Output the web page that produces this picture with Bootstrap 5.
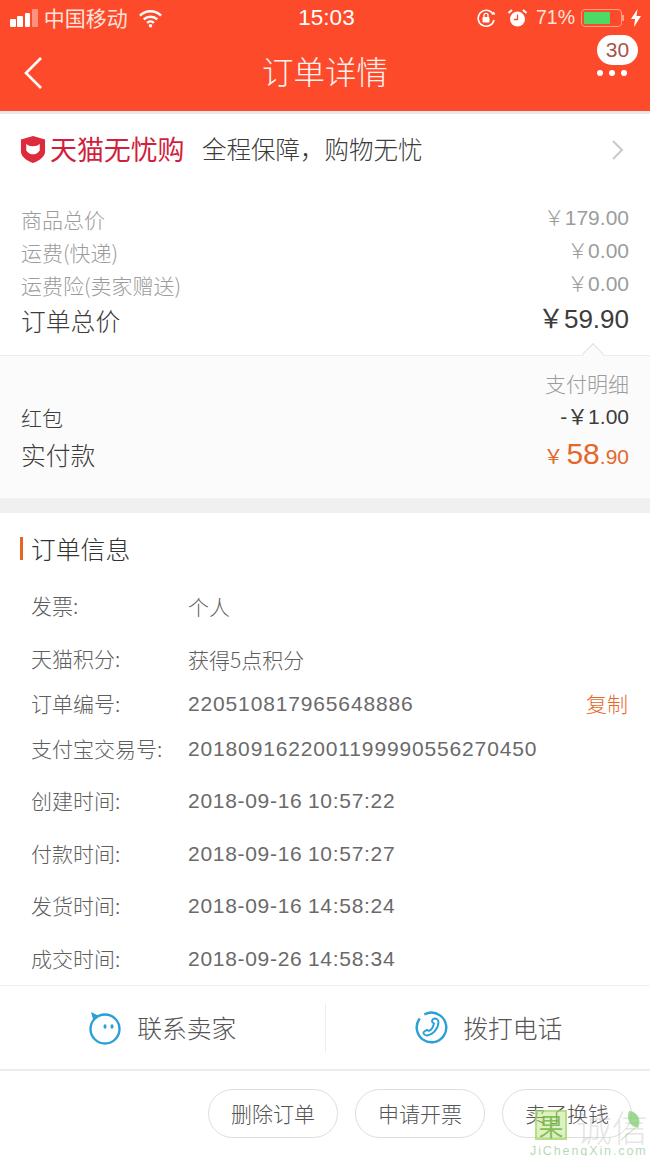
<!DOCTYPE html>
<html lang="zh">
<head>
<meta charset="utf-8">
<link href="https://cdn.jsdelivr.net/npm/bootstrap@5.3.0/dist/css/bootstrap.min.css" rel="stylesheet">
<style>
html,body{margin:0;background:#fff;}
.screen{width:650px;height:1156px;overflow:hidden;position:relative;font-family:"Liberation Sans","Noto Sans CJK SC",sans-serif;color:#3c3c3c;background:#fff;}
.cjk{font-family:"Noto Sans CJK SC",sans-serif;}
.hdr{background:#fd4a2b;height:111px;color:#fff;}
.stat{height:35px;padding:0 9px 0 10px;font-size:19.5px;line-height:35px;color:#fde3dc;}
.stat-l{width:272px;}
.stat-r{width:270px;}
.stat-op{font-size:21px;margin-left:6px;}
.stat-wifi{margin-left:10px;}
.stat-time{font-size:22.5px;color:#fff;}
.sig{gap:1.7px;height:18px;}
.sig i{display:block;width:5.7px;background:#fff;border-radius:1px;}
.stat-gap{margin-left:11px;}
.stat-gap2{margin-left:8px;}
.bat{width:41px;height:18px;border:1px solid #ffa08a;border-radius:4px;padding:2px;margin-left:6px;}
.bat b{display:block;height:100%;width:26px;background:#4cd964;border-radius:1px;}
.nub{width:2px;height:6px;background:#ffa08a;margin-right:7px;}
.tbar{height:76px;padding:0 12px 0 22px;}
.tside{width:32px;}
.back{margin-top:20px;display:block;}
.ttl{font-size:31.5px;font-weight:300;line-height:70px;color:#fff3ef;}
.more-wrap{width:42px;height:76px;position:relative;}
.cnt{position:absolute;left:1px;top:0;width:41px;height:30px;border-radius:15px;background:#fff;color:#a9534a;font-size:21px;line-height:30px;text-align:center;}
.dots{position:absolute;left:1px;top:35px;gap:6px;}
.dots i{display:block;width:6px;height:6px;background:#fff;border-radius:50%;}
.hline{height:3px;background:#e8e8e8;}
.promo{height:71px;padding:0 25px 0 20px;}
.shield{width:26px;height:27px;}
.promo-brand{font-size:27px;color:#d11f3d;font-weight:400;margin-left:4px;width:137px;white-space:nowrap;letter-spacing:-.1px;}
.promo-text{font-size:24.5px;font-weight:300;margin-left:15px;color:#3b3b3b;}
.prices{padding:18px 21px 0;height:170px;}
.prow{height:33px;font-size:21px;line-height:33px;color:#9c9c9c;font-weight:300;}
.prow .num{line-height:29px;}
.ptotal{height:37px;font-size:24.8px;line-height:37px;color:#3c3c3c;}
.ptotal .val{font-size:26px;line-height:35px;}
.detail{background:#fbfbfb;border-top:1px solid #ececec;height:143px;padding:12px 21px 0;position:relative;}
.caret{position:absolute;right:50px;top:-9px;width:14px;height:14px;transform:rotate(45deg) scale(1.1);transform-origin:center;background:#fbfbfb;border-top:1px solid #e4e4e4;border-left:1px solid #e4e4e4;}
.pd{font-size:21px;color:#9c9c9c;text-align:right;height:33px;line-height:30px;font-weight:300;}
.pr{height:33px;line-height:33px;font-size:21px;color:#3c3c3c;}
.pr .num{line-height:31px;}
.pr2{height:41px;line-height:41px;font-size:24.8px;color:#3c3c3c;}
.orange{color:#e5682a;line-height:39px;}
.big{font-size:30px;}
.mid{font-size:21px;}
.yen{font-size:20px;margin-right:3px;}
.sep{height:15px;background:#f0f0f0;}
.info-h{height:71px;padding-left:20px;}
.bar-o{width:3px;height:23px;background:#e8641e;margin-right:8px;}
.info-t{font-size:24.8px;font-weight:300;color:#333;}
.infos{height:401px;padding-top:7px;}
.irow{padding:0 22px 0 31px;font-size:21px;line-height:30px;height:30px;color:#5e5e5e;font-weight:300;}
.ilab{width:157px;line-height:28px;}
.ival{letter-spacing:.85px;color:#6a6a6a;font-weight:400;}
.dt{letter-spacing:.7px;word-spacing:-1px;}
.copy{color:#e5682a;line-height:28px;}
.gl{margin-top:22.5px;}
.gs{margin-top:14.5px;}
.gm{margin-top:15.5px;}
.foot1{height:86px;border-top:1px solid #efefef;border-bottom:2px solid #ececec;}
.fcell{flex:1 1 0;gap:15px;font-size:24.8px;font-weight:300;color:#555;}
.fcell-r svg{margin-left:2px;}
.fdiv{width:1px;height:50px;background:#eee;}
.foot2{padding:18px 18px 0 0;gap:17px;}
.pillbtn{width:130px;height:49px;border-radius:25px;border:1px solid #ddd;font-size:21px;font-weight:300;color:#555;background:#fff;padding:0;line-height:47px;text-align:center;}
.wm{position:absolute;left:533px;top:1109px;width:117px;height:47px;}
.wm-box{position:absolute;left:2px;top:1px;width:32px;height:30px;background:rgba(180,225,120,.45);border:2px solid rgba(150,210,90,.55);color:rgba(110,175,60,.8);font-size:25px;line-height:26px;text-align:center;}
.wm-t{position:absolute;left:43px;top:-1px;font-size:36px;line-height:36px;font-weight:300;color:rgba(190,190,190,.4);white-space:nowrap;}
.wm-u{position:absolute;left:-3px;top:36px;font-size:12.5px;letter-spacing:1.9px;color:rgba(130,190,130,.6);white-space:nowrap;line-height:12px;}
.leaf{position:absolute;left:86px;top:0;}
</style>
</head>
<body>
<div class="screen">
  <div class="hdr">
    <div class="stat d-flex align-items-center justify-content-between">
      <div class="stat-l d-flex align-items-center">
        <div class="sig d-flex align-items-end"><i style="height:8px"></i><i style="height:11px"></i><i style="height:14px"></i><i style="height:18px;opacity:.4"></i></div>
        <span class="cjk stat-op">中国移动</span>
        <svg class="stat-wifi" width="25" height="20" viewBox="0 0 26 20"><path d="M2 7.500a15.500 15.500 0 0 1 22 0M6 11.500a10 10 0 0 1 14 0M9.500 15a5 5 0 0 1 7 0" fill="none" stroke="#fff" stroke-width="2.600"/><circle cx="13" cy="18" r="1.800" fill="#fff"/></svg>
      </div>
      <div class="stat-time">15:03</div>
      <div class="stat-r d-flex align-items-center justify-content-end">
        <svg width="20" height="20" viewBox="0 0 20 20"><path d="M17 6a8 8 0 1 0 1 6" fill="none" stroke="#fff" stroke-width="1.600"/><path d="M19.500 6.500l-4 .3 2.200-3.400z" fill="#fff"/><rect x="6.500" y="9" width="7" height="5.500" rx="1" fill="#fff"/><path d="M8 9V7.400a2 2 0 0 1 4 0V9" fill="none" stroke="#fff" stroke-width="1.300"/></svg>
        <svg class="stat-gap" width="21" height="20" viewBox="0 0 21 20"><circle cx="10.500" cy="11" r="7.500" fill="#fff"/><path d="M10.500 6.500V11.500H7" fill="none" stroke="#fd4a2b" stroke-width="1.300"/><path d="M1.500 5l3.500-3M19.500 5l-3.500-3" stroke="#fff" stroke-width="2.200"/></svg>
        <span class="stat-gap2">71%</span>
        <div class="bat"><b></b></div>
        <div class="nub"></div>
        <svg width="10" height="18" viewBox="1 0 10 18" preserveAspectRatio="none"><path d="M7.500 0L1 10h4l-1 8 7-11H6.500z" fill="#fff"/></svg>
      </div>
    </div>
    <div class="tbar d-flex align-items-start justify-content-between">
      <div class="tside"><svg class="back" width="22" height="36" viewBox="0 0 22 36"><path d="M19 3L4 18l15 15" fill="none" stroke="#fff" stroke-width="2.600"/></svg></div>
      <div class="ttl cjk">订单详情</div>
      <div class="more-wrap"><span class="cnt">30</span><div class="dots d-flex"><i></i><i></i><i></i></div></div>
    </div>
  </div>
  <div class="hline"></div>
  <div class="promo d-flex align-items-center">
    <svg class="shield" viewBox="0 0 25 28"><path d="M12.500 0L25 3.500V16c0 5-5 9-12.500 12C5 25 0 21 0 16V3.500z" fill="#dd2a3d"/><path d="M5.500 8c2 2 4 2.500 7 2.500S17.500 10 19.500 8v7c-2 3-4.500 4-7 4s-5-1-7-4z" fill="#fff"/></svg>
    <div class="promo-brand cjk">天猫无忧购</div>
    <div class="promo-text cjk flex-grow-1">全程保障，购物无忧</div>
    <svg width="14" height="22" viewBox="0 0 14 22"><path d="M2 2l9 9-9 9" fill="none" stroke="#c9c9c9" stroke-width="2"/></svg>
  </div>
  <div class="prices">
    <div class="prow d-flex justify-content-between"><span class="cjk">商品总价</span><span class="num">￥179.00</span></div>
    <div class="prow d-flex justify-content-between"><span class="cjk">运费(快递)</span><span class="num">￥0.00</span></div>
    <div class="prow d-flex justify-content-between"><span class="cjk">运费险(卖家赠送)</span><span class="num">￥0.00</span></div>
    <div class="ptotal d-flex justify-content-between"><span class="cjk fw-light">订单总价</span><span class="val">￥59.90</span></div>
  </div>
  <div class="detail">
    <div class="caret"></div>
    <div class="pd cjk">支付明细</div>
    <div class="pr d-flex justify-content-between"><span class="cjk fw-light">红包</span><span class="num">-￥1.00</span></div>
    <div class="pr2 d-flex justify-content-between"><span class="cjk fw-light">实付款</span><span class="orange"><span class="yen">￥</span><span class="big">58</span><span class="mid">.90</span></span></div>
  </div>
  <div class="sep"></div>
  <div class="info-h d-flex align-items-center"><div class="bar-o"></div><div class="info-t cjk">订单信息</div></div>
  <div class="infos">
    <div class="irow d-flex cjk"><div class="ilab">发票:</div><div>个人</div></div>
    <div class="irow gl d-flex cjk"><div class="ilab">天猫积分:</div><div>获得5点积分</div></div>
    <div class="irow gm d-flex"><div class="ilab cjk">订单编号:</div><div class="ival flex-grow-1">220510817965648886</div><div class="copy cjk">复制</div></div>
    <div class="irow gs d-flex"><div class="ilab cjk">支付宝交易号:</div><div class="ival">2018091622001199990556270450</div></div>
    <div class="irow gl d-flex"><div class="ilab cjk">创建时间:</div><div class="ival dt">2018-09-16 10:57:22</div></div>
    <div class="irow gl d-flex"><div class="ilab cjk">付款时间:</div><div class="ival dt">2018-09-16 10:57:27</div></div>
    <div class="irow gl d-flex"><div class="ilab cjk">发货时间:</div><div class="ival dt">2018-09-16 14:58:24</div></div>
    <div class="irow gl d-flex"><div class="ilab cjk">成交时间:</div><div class="ival dt">2018-09-26 14:58:34</div></div>
  </div>
  <div class="foot1 d-flex align-items-center">
    <div class="fcell cjk d-flex align-items-center justify-content-center">
      <svg width="34" height="34" viewBox="0 0 34 34"><circle cx="17" cy="18" r="14.500" fill="none" stroke="#2a9fd8" stroke-width="2.400"/><path d="M3 1l8 4-5.500 5z" fill="#2a9fd8"/><ellipse cx="17" cy="15.500" rx="1.500" ry="2.200" fill="#2a9fd8"/><ellipse cx="24" cy="15.500" rx="1.500" ry="2.200" fill="#2a9fd8"/></svg>
      <span>联系卖家</span>
    </div>
    <div class="fdiv"></div>
    <div class="fcell fcell-r cjk d-flex align-items-center justify-content-center">
      <svg width="33" height="33" viewBox="0 0 33 33"><circle cx="16.500" cy="16.500" r="14.800" fill="none" stroke="#2a9fd8" stroke-width="2.400" stroke-dasharray="70 6 17 0" transform="rotate(-55 16.500 16.500)"/><path d="M19.500 7.500c2 0 4 1.500 4 3.500 0 6-5 12.500-11.500 13.500-2 .2-3.500-1.500-3.500-2.800 0-1 2.800-2.700 3.800-2.700l1.700 1c2.500-1.200 4.200-4.300 5-7.500l-1.800-1.500c-.8-1 .8-3.500 2.300-3.500z" fill="none" stroke="#2a9fd8" stroke-width="1.900"/></svg>
      <span>拨打电话</span>
    </div>
  </div>
  <div class="foot2 d-flex justify-content-end">
    <button class="pillbtn cjk btn">删除订单</button>
    <button class="pillbtn cjk btn">申请开票</button>
    <button class="pillbtn cjk btn">卖了换钱</button>
  </div>
  <div class="wm">
    <div class="wm-box cjk">果</div>
    <div class="wm-t cjk">诚信</div>
    <svg class="leaf" width="28" height="34" viewBox="0 0 28 34"><path d="M10 2c8 1 13 7 9 17C11 18 7 10 10 2z" fill="rgba(130,205,110,.75)"/><path d="M2 31l14-12" stroke="rgba(130,205,110,.6)"/></svg>
    <div class="wm-u">JiChengXin.com</div>
  </div>
</div>
<script src="https://cdn.jsdelivr.net/npm/bootstrap@5.3.0/dist/js/bootstrap.bundle.min.js"></script>
</body>
</html>
